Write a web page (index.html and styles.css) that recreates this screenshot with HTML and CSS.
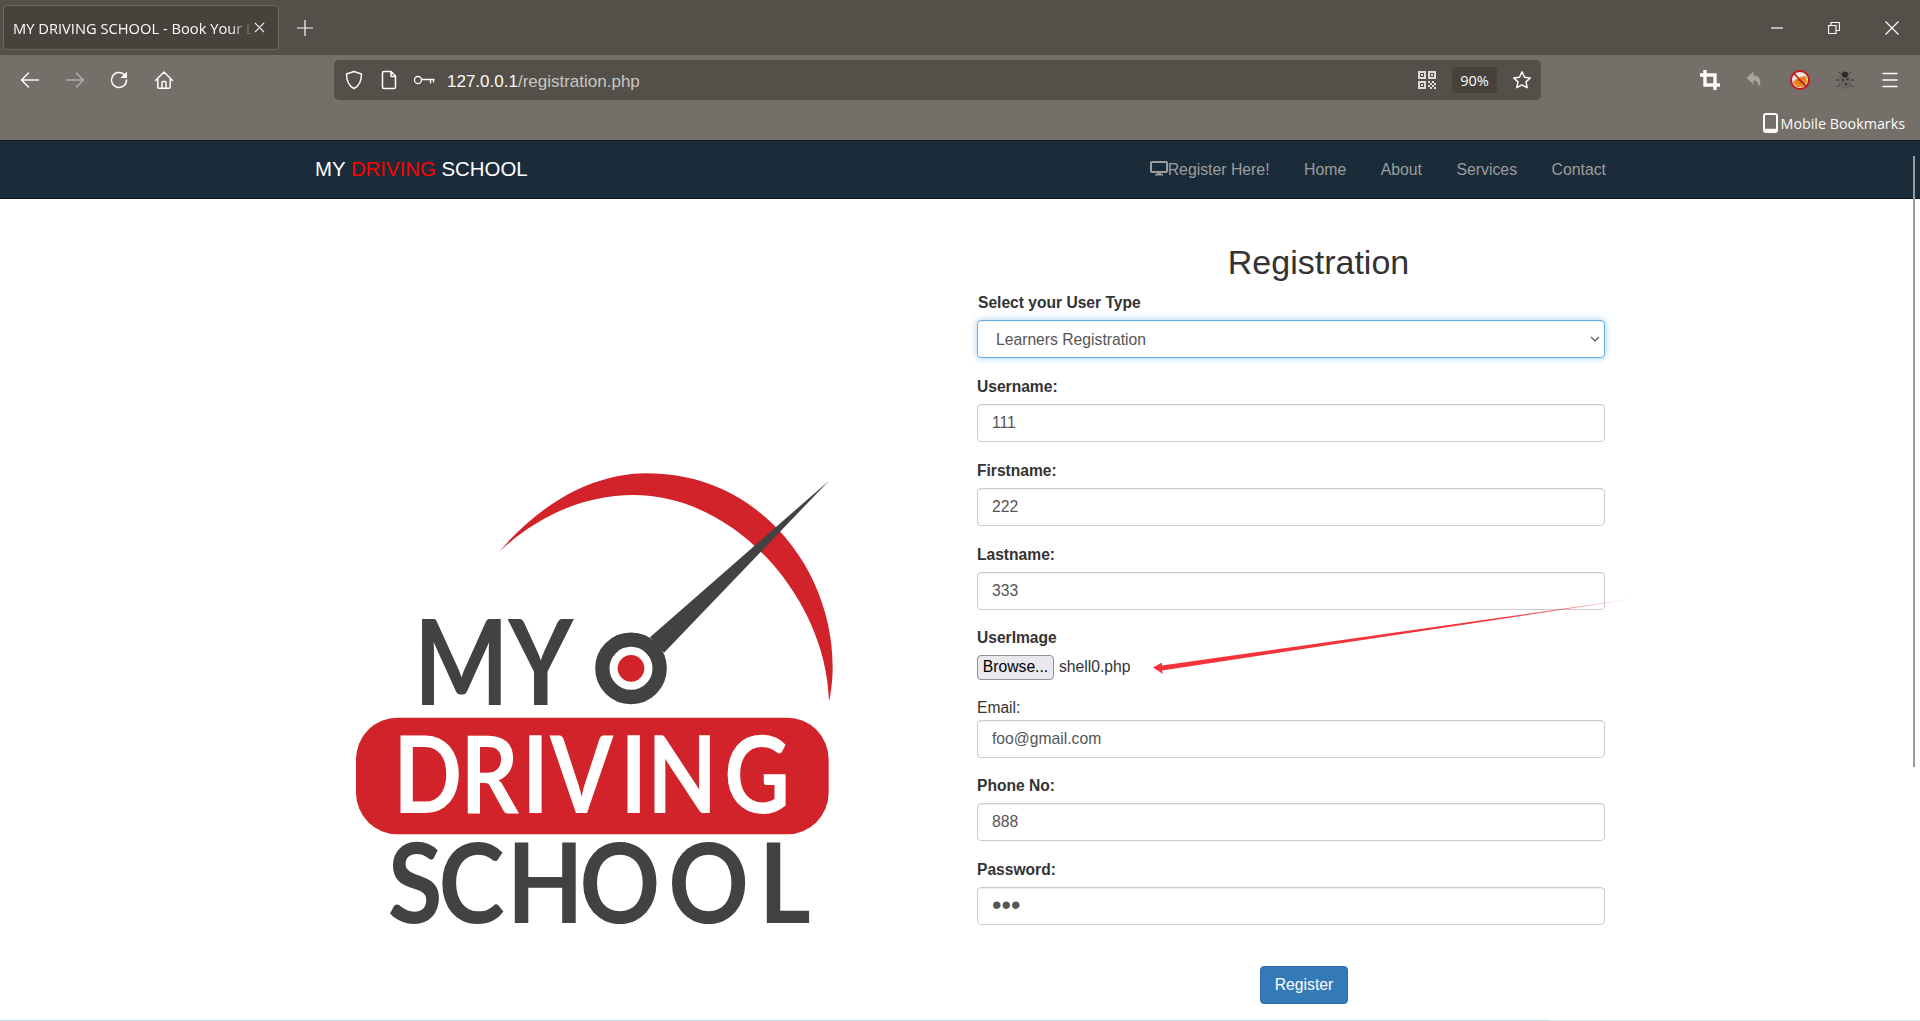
FILE: index.html
```html
<!DOCTYPE html>
<html lang="en">
<head>
<meta charset="utf-8">
<title>MY DRIVING SCHOOL - Book Your Lesson</title>
<link rel="stylesheet" href="styles.css">
</head>
<body>
<header class="chrome">
  <div class="tabstrip">
    <div class="tab">
      <span class="tab-title">MY DRIVING SCHOOL - Book Your Lesson</span>
      <svg class="tab-close" width="11" height="11" viewBox="0 0 12 12"><path d="M1 1l10 10M11 1L1 11"/></svg>
    </div>
    <svg class="new-tab" width="16" height="16" viewBox="0 0 16 16"><path d="M8 0v16M0 8h16"/></svg>
    <div class="winctl">
      <svg width="12" height="12" viewBox="0 0 12 12"><path d="M0 6h12"/></svg>
      <svg width="12" height="12" viewBox="0 0 12 12"><path d="M.5 3.500h7.500v8H.5zM3 3.500V.5h8.500v8H8"/></svg>
      <svg width="14" height="14" viewBox="0 0 14 14"><path d="M.5.5l13 13M13.500.5l-13 13"/></svg>
    </div>
  </div>
  <div class="toolbar">
    <div class="nav-row">
      <div class="nav-btns">
        <svg class="ico" viewBox="0 0 20 20"><path d="M18.500 10H1.500M8.500 3L1.500 10l7 7"/></svg>
        <svg class="ico dim" viewBox="0 0 20 20"><path d="M1.500 10h17M11.500 3l7 7-7 7"/></svg>
        <svg class="ico" viewBox="0 0 20 20"><path d="M17.500 10a7.500 7.500 0 1 1-2.500-5.600L17 6.500"/><path class="fill" d="M18 1.500V8h-6.500z"/></svg>
        <svg class="ico" viewBox="0 0 20 20"><path d="M1.500 10.500L10 2l8.500 8.500M3.800 9v8a1.300 1.300 0 0 0 1.300 1.300h9.800a1.300 1.300 0 0 0 1.300-1.300V9M8 18v-5.500a1 1 0 0 1 1-1h2a1 1 0 0 1 1 1V18"/></svg>
      </div>
      <div class="urlbar">
        <svg class="ico sm" viewBox="0 0 20 20"><path d="M10 1.500l7.500 2.500c0 7-1.500 11.500-7.500 14.500C4 15.500 2.500 11 2.500 4z"/></svg>
        <svg class="ico sm" viewBox="0 0 20 20"><path d="M3.500 3a1.500 1.500 0 0 1 1.500-1.500h7L16.500 6v11a1.500 1.500 0 0 1-1.500 1.500H5A1.500 1.500 0 0 1 3.500 17zM12 1.500V6.500h4.500"/></svg>
        <svg class="ico key" viewBox="0 0 22 12"><circle cx="5" cy="6" r="3.500"/><path d="M9 5.500h12M17.500 5.500V9M20.500 5.500V8"/></svg>
        <span class="url"><span class="url-host">127.0.0.1</span>/registration.php</span>
        <svg class="qr" viewBox="0 0 18 18" shape-rendering="crispEdges"><path d="M0 0h8v8H0zM10 0h8v8h-8zM0 10h8v8H0z"/><path class="qr-hole" d="M2 2h4v4H2zM12 2h4v4h-4zM2 12h4v4H2z"/><path d="M3 3h2v2H3zM13 3h2v2h-2zM3 13h2v2H3zM10 10h2v2h-2zM14 10h2v2h-2zM12 12h2v2h-2zM16 12h2v2h-2zM10 14h2v2h-2zM14 14h2v2h-2zM12 16h2v2h-2zM16 16h2v2h-2z"/></svg>
        <span class="zoom-pill">90%</span>
        <svg class="ico star" viewBox="0 0 20 20"><path d="M10 1.800l2.500 5.400 5.800.7-4.300 4 1.200 5.800-5.200-2.900-5.200 2.900 1.200-5.800-4.300-4 5.800-.7z"/></svg>
      </div>
      <div class="ext-btns">
        <svg class="ico heavy" viewBox="0 0 20 20"><path d="M5 0v15h15M0 5h15v15"/></svg>
        <svg class="ico muted" viewBox="0 0 20 20"><path class="fill-muted" d="M8.500 1.500L1.500 8l7 6.500v-4c3 0 5 1.500 5.500 6.500 3-6 1-11.500-5.500-11.500z"/></svg>
        <svg class="ico-raw" viewBox="0 0 20 20"><circle cx="10" cy="10" r="9" fill="#e9e6e2"/><path d="M3 13c1-4 5-4 7-6l6-1 1 6-4 5H7z" fill="#e8891c"/><path d="M7 11l5-1M9 13l4-1" stroke="#a85a0c" stroke-width="1"/><circle cx="10" cy="10" r="9" fill="none" stroke="#c8161d" stroke-width="2"/><path d="M4 3.500l12 13" stroke="#c8161d" stroke-width="1.800"/></svg>
        <svg class="ico-raw" viewBox="0 0 20 20"><path d="M4 2l3 3M16 2l-3 3M1 10h4M19 10h-4M2 17l4-3M18 17l-4-3" stroke="#3a3a3a" fill="none"/><ellipse cx="10" cy="11.500" rx="6" ry="7.500" fill="#66665f"/><circle cx="10" cy="4.500" r="3" fill="#2b2b2b"/><circle cx="8" cy="10" r="1.100" fill="#2a2a2a"/><circle cx="12.500" cy="9" r="1.100" fill="#2a2a2a"/><circle cx="11" cy="14" r="1.100" fill="#2a2a2a"/></svg>
        <svg class="ico" viewBox="0 0 20 20"><path d="M3 3.500h14M3 10h14M3 16.500h14"/></svg>
      </div>
    </div>
    <div class="bookmarks">
      <svg class="mobile" width="15" height="20" viewBox="0 0 15 20"><rect x="1" y="1" width="13" height="18" rx="2"/><path d="M1 17h13"/></svg>
      <span>Mobile Bookmarks</span>
    </div>
  </div>
</header>

<nav class="sitenav">
  <a class="brand" href="#">MY <span class="brand-red">DRIVING</span> SCHOOL</a>
  <ul class="navlinks">
    <li class="reg">
      <svg width="18" height="15" viewBox="0 0 18 15"><rect class="mon" x="1" y="1" width="16" height="10" rx="1"/><path class="monbase" d="M7 11h4v2h2v1.500H5V13h2z"/></svg><a href="#">Register Here!</a>
    </li>
    <li><a href="#">Home</a></li>
    <li><a href="#">About</a></li>
    <li><a href="#">Services</a></li>
    <li><a href="#">Contact</a></li>
  </ul>
</nav>
<div class="scrollthumb"></div>

<main class="page">
  <svg class="logo" width="520" height="480" viewBox="0 0 1560 1440" role="img" aria-label="My Driving School logo">
    <path class="logo-red" d="M478 275C600 130 760 40 920 40C1260 40 1478 330 1478 620C1478 650 1475 690 1467 725C1460 420 1190 105 880 105C730 105 590 170 478 275Z"/>
    <path class="logo-dark" d="M930 532L1467 62L972 578Z"/>
    <circle class="logo-ring" cx="873" cy="625" r="86"/>
    <circle class="logo-red" cx="873" cy="625" r="40"/>
    <text class="logo-my" transform="scale(.85 1)" y="735" x="261 594">MY</text>
    <rect class="logo-red" x="48" y="773" width="1418" height="350" rx="125"/>
    <text class="logo-driving" transform="scale(.85 1)" y="1058" x="188 425 642 741 989 1084 1356">DRIVING</text>
    <text class="logo-school" transform="scale(.9 1)" y="1388" x="159 328 556 798 1094 1396">SCHOOL</text>
  </svg>

  <form class="regform">
    <h2 class="title">Registration</h2>
    <div class="group first">
      <label class="lbl indent">Select your User Type</label>
      <div class="select-wrap">
        <select class="field select"><option>Learners Registration</option></select>
        <svg class="chevron" width="10" height="6" viewBox="0 0 10 6"><path d="M1 1l4 4 4-4"/></svg>
      </div>
    </div>
    <div class="group"><label class="lbl">Username:</label><input class="field" value="111"></div>
    <div class="group"><label class="lbl">Firstname:</label><input class="field" value="222"></div>
    <div class="group"><label class="lbl">Lastname:</label><input class="field" value="333"></div>
    <div class="group file-group">
      <label class="lbl">UserImage</label>
      <div class="filerow"><button type="button" class="browse">Browse...</button><span class="filename">shell0.php</span></div>
    </div>
    <div class="group email-group"><label class="lbl plain">Email:</label><input class="field" value="foo@gmail.com"></div>
    <div class="group"><label class="lbl">Phone No:</label><input class="field" value="888"></div>
    <div class="group"><label class="lbl">Password:</label><input class="field pw" type="password" value="111"></div>
    <div class="actions"><button type="button" class="register">Register</button></div>
  </form>
</main>

<svg class="arrow" width="500" height="80" viewBox="0 0 500 80">
  <defs><linearGradient id="fade" x1="0" x2="1" y1="0" y2="0"><stop offset="0" stop-color="#f5333a"/><stop offset=".7" stop-color="#f5333a"/><stop offset=".88" stop-color="#f5333a" stop-opacity=".6"/><stop offset="1" stop-color="#f5333a" stop-opacity="0"/></linearGradient></defs>
  <path fill="url(#fade)" d="M1 71.500L10 66.500L10 69.500L494 1L10 74.500L11 78Z"/>
</svg>
<div class="bottomline"></div>
</body>
</html>
```
FILE: styles.css
```css
* { box-sizing: border-box; }
html, body { margin: 0; padding: 0; height: 1021px; overflow: hidden; background: #fff; }
body { position: relative; font-family: "Liberation Sans", Arial, sans-serif; color: #333; }

/* browser chrome */
.chrome { height: 140px; font-family: "Open Sans", "Noto Sans", sans-serif; color: #fbfbfa; }
.tabstrip { height: 55px; background: #544f48; display: flex; align-items: center; padding: 0 21px 0 3px; }
.tabstrip svg path { stroke: #fbfbfa; stroke-width: 1.200; fill: none; }
.tab { width: 276px; height: 45px; background: #47433c; border: 1px solid #6b675f; border-radius: 4px; display: flex; align-items: center; padding: 0 13px 0 9px; }
.tab-title { flex: 1; white-space: nowrap; overflow: hidden; font-size: 14.700px;
  -webkit-mask-image: linear-gradient(to right, #000 90%, transparent 100%); mask-image: linear-gradient(to right, #000 90%, transparent 100%); }
.tab-close { margin-left: 0; }
.new-tab { margin-left: 18px; }
.winctl { margin-left: auto; display: flex; align-items: center; gap: 45px; }
.toolbar { height: 85px; background: #746f68; display: flex; flex-direction: column; }
.nav-row { height: 50px; display: flex; align-items: flex-start; padding-top: 5px; }
.ico { width: 20px; height: 20px; fill: none; stroke: #fbfbfa; stroke-width: 1.500; stroke-linecap: round; stroke-linejoin: round; }
.ico .fill { fill: #fbfbfa; stroke: none; }
.ico.dim { opacity: .45; }
.ico.heavy { stroke-width: 3.400; stroke-linecap: butt; stroke-linejoin: miter; }
.ico.muted { stroke: none; }
.fill-muted { fill: #a8a49e; }
.ico-raw { width: 20px; height: 20px; }
.nav-btns { width: 334px; height: 40px; display: flex; align-items: center; gap: 24.670px; padding-left: 20px; }
.urlbar { width: 1207px; height: 40px; background: #544f48; border-radius: 5px; display: flex; align-items: center; padding: 0 9px 0 10px; gap: 15px; }
.key { width: 22px; height: 12px; margin-left: -1px; stroke-width: 1.300; }
.url { flex: 1; padding-top: 4px; font-family: "Liberation Sans", sans-serif; font-size: 17px; color: #c9c6c2; white-space: nowrap; margin-left: -3px; }
.url-host { color: #fbfbfa; }
.qr { width: 18px; height: 18px; fill: #dddbd7; }
.qr-hole { fill: #544f48; }
.zoom-pill { width: 45px; height: 26px; margin-left: 1px; background: #47433c; border-radius: 4px; display: flex; align-items: center; justify-content: center; font-size: 14.500px; }
.ext-btns { flex: 1; height: 40px; display: flex; align-items: center; gap: 25px; padding-left: 159px; }
.bookmarks { flex: 1; display: flex; align-items: center; justify-content: flex-end; padding: 1px 15px 0 0; font-size: 14.300px; gap: 3px; }
.mobile rect { fill: none; stroke: #fbfbfa; stroke-width: 2; }
.mobile path { stroke: #fbfbfa; stroke-width: 2.500; fill: none; }

/* site nav */
.sitenav { height: 59px; background: #1a2b3a; border-top: 1px solid #131f2a; border-bottom: 1px solid #0c151d; display: flex; align-items: center; padding: 0 314px 0 315px; justify-content: space-between; }
.brand { color: #fff; font-size: 20.400px; text-decoration: none; }
.brand-red { color: #f00; }
.navlinks { list-style: none; margin: 0; padding: 0; display: flex; gap: 34.500px; font-size: 15.800px; }
.navlinks a { color: #9d9d9d; text-decoration: none; }
.navlinks .reg { display: flex; align-items: center; }
.mon { fill: none; stroke: #9d9d9d; stroke-width: 2; }
.monbase { fill: #9d9d9d; }
.reg svg { margin-top: -2px; }
.scrollthumb { position: absolute; left: 1913px; top: 156px; width: 2px; height: 611px; background: #9a9a9a; }

/* page body */
.page { display: flex; align-items: flex-start; padding-left: 340px; height: 822px; }
.logo { flex: none; margin-top: 261px; }
.logo-red { fill: #d2232a; }
.logo-dark { fill: #424242; }
.logo-ring { fill: #fff; stroke: #424242; stroke-width: 43; }
.logo-my, .logo-school, .logo-driving { font-family: Lato, sans-serif; font-weight: 700; }
.logo-my { fill: #424242; font-size: 354px; }
.logo-driving { fill: #fff; font-size: 320px; }
.logo-school { fill: #424242; font-size: 333px; }

.regform { width: 628px; margin-left: 117px; flex: none; }
.title { margin: 45px 0 0 0; padding-left: 55px; font-size: 34px; line-height: 36px; font-weight: 400; text-align: center; color: #333; }
.group { margin-top: 20px; }
.group.first { margin-top: 14px; }
.email-group ~ .group { margin-top: 19.500px; }
.lbl { display: block; height: 18px; line-height: 18px; margin-bottom: 8px; font-size: 15.600px; font-weight: 700; color: #333; }
.lbl.indent { padding-left: 1px; }
.lbl.plain { font-weight: 400; margin-bottom: 3px; }
.field { display: block; width: 100%; height: 38px; padding: 0 14px; font: 15.700px "Liberation Sans", sans-serif; color: #555; background: #fff; border: 1px solid #ccc; border-radius: 4px; box-shadow: inset 0 1px 1px rgba(0,0,0,.075); outline: none; }
.field.pw { font-size: 27px; letter-spacing: 0; }
.select-wrap { position: relative; }
.select { appearance: none; -webkit-appearance: none; padding-left: 18px; border-color: #66afe9; box-shadow: inset 0 1px 1px rgba(0,0,0,.075), 0 0 7px rgba(102,175,233,.6); }
.chevron { position: absolute; right: 5px; top: 16px; fill: none; stroke: #555; stroke-width: 1.200; }
.file-group { margin-top: 18.500px; }
.filerow { display: flex; align-items: center; gap: 5px; height: 25px; margin-top: 2px; }
.browse { width: 77px; height: 25px; padding: 0; font: 15.700px "Liberation Sans", sans-serif; color: #000; background: #e9e9ed; border: 1px solid #8f8f9d; border-radius: 4px; }
.filename { font-size: 15.700px; color: #333; }
.email-group { margin-top: 19px; }
.actions { padding: 41px 0 0 283px; }
.register { width: 88px; height: 38px; padding: 0; font: 15.700px "Liberation Sans", sans-serif; color: #fff; background: #337ab7; border: 1px solid #2e6da4; border-radius: 4px; }

.arrow { position: absolute; left: 1152px; top: 596px; }
.bottomline { position: absolute; left: 0; right: 0; top: 1020px; height: 1px; background: linear-gradient(to right, #bcd9df 0, #bcd9df 1550px, #d5e9ee 1550px); }
```
